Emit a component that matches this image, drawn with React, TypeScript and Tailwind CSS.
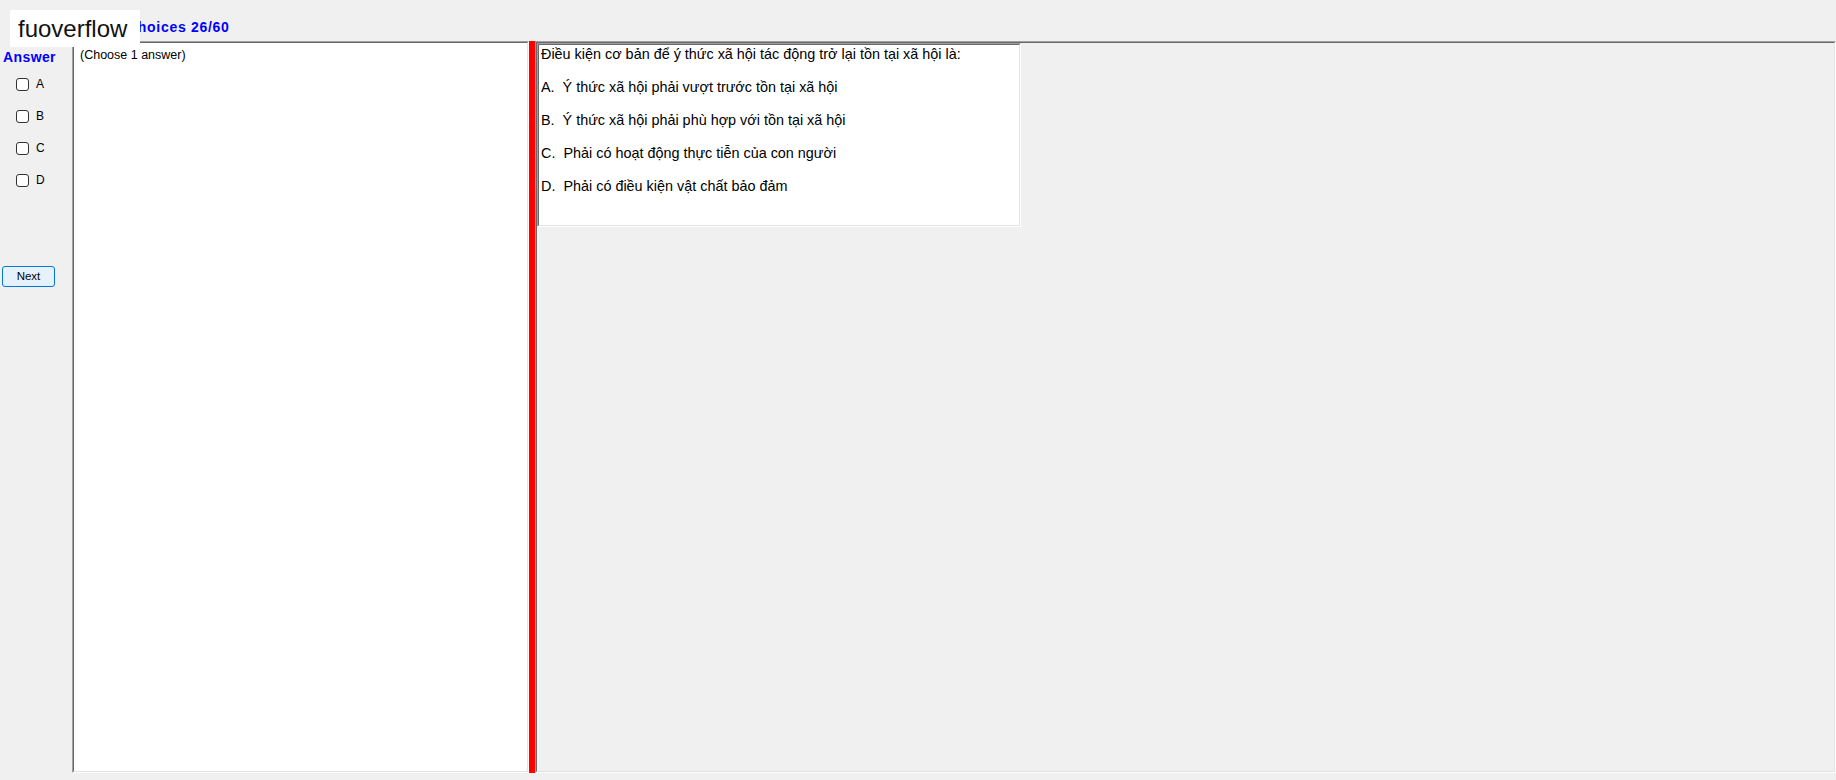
import type { ReactNode } from "react";

const letters = ["A", "B", "C", "D"];

const question = "Điều kiện cơ bản để ý thức xã hội tác động trở lại tồn tại xã hội là:";

const options = [
  "A.  Ý thức xã hội phải vượt trước tồn tại xã hội",
  "B.  Ý thức xã hội phải phù hợp với tồn tại xã hội",
  "C.  Phải có hoạt động thực tiễn của con người",
  "D.  Phải có điều kiện vật chất bảo đảm",
];

// WinForms-style Fixed3D border: dark top/left, light bottom/right
function Sunken({
  className = "",
  innerClassName = "",
  children,
}: {
  className?: string;
  innerClassName?: string;
  children?: ReactNode;
}) {
  return (
    <div
      className={`border border-t-[#a0a0a0] border-l-[#a0a0a0] border-r-white border-b-white ${className}`}
    >
      <div
        className={`h-full border border-t-[#696969] border-l-[#696969] border-r-[#e3e3e3] border-b-[#e3e3e3] ${innerClassName}`}
      >
        {children}
      </div>
    </div>
  );
}

function CheckRow({ label }: { label: string }) {
  return (
    <label className="flex h-[32px] items-center pl-[16px]">
      <span className="h-[13px] w-[13px] rounded-[3px] border border-[#333333] bg-white" />
      <span className="ml-[7px] text-[12px] leading-[13px] text-black">{label}</span>
    </label>
  );
}

export default function App() {
  return (
    <div
      className="relative h-[780px] w-[1836px] overflow-hidden bg-[#f0f0f0] text-black"
      style={{ fontFamily: '"Liberation Sans", Arial, sans-serif' }}
    >
      {/* header */}
      <div className="h-[41px] pl-[127px] pt-[15px]">
        <span className="text-[14px] font-bold leading-[16px] tracking-[0.7px] text-[#0000ff]">
          Choices 26/60
        </span>
      </div>

      <div className="flex h-[732px]">
        {/* answer sidebar */}
        <div className="w-[72px] shrink-0">
          <div className="pl-[3px] pt-[8px] text-[14px] font-bold leading-[16px] tracking-[0.4px] text-[#0000ff]">
            Answer
          </div>
          <div className="mt-[3px]">
            {letters.map((l) => (
              <CheckRow key={l} label={l} />
            ))}
          </div>
          <button className="ml-[2px] mt-[70px] flex h-[21px] w-[53px] items-center justify-center rounded-[3px] border border-[#0078d7] bg-[#e5f1fb] text-[11.5px] text-black">
            Next
          </button>
        </div>

        {/* left text panel */}
        <Sunken className="h-full w-[457px] shrink-0" innerClassName="bg-white">
          <div className="pl-[6px] pt-[5px] text-[12.5px] leading-[15px]">(Choose 1 answer)</div>
        </Sunken>

        {/* splitter */}
        <div className="h-full w-[6px] shrink-0 bg-[#ff0000]" />

        {/* right question panel */}
        <Sunken className="h-full flex-1" innerClassName="bg-[#f0f0f0]">
          <Sunken className="h-[184px] w-[484px]" innerClassName="bg-white">
            <div className="pl-[2px] pt-[1px] text-[14.4px] leading-[16.5px]">
              <p className="mb-[16.5px]">{question}</p>
              {options.map((o) => (
                <p key={o} className="mb-[16.5px] whitespace-pre">
                  {o}
                </p>
              ))}
            </div>
          </Sunken>
        </Sunken>
      </div>

      {/* watermark overlay */}
      <div className="absolute left-[10px] top-[10px] h-[37px] w-[130px] bg-white pl-[8px] text-[24px] leading-[37px] text-[#111111]">
        fuoverflow
      </div>
    </div>
  );
}
